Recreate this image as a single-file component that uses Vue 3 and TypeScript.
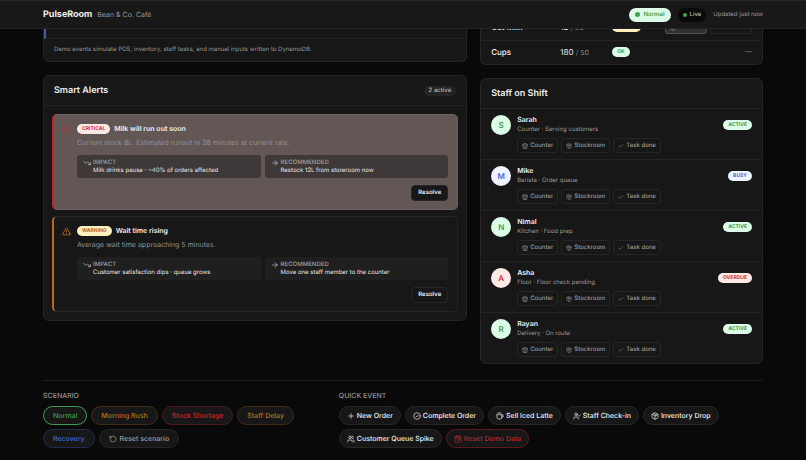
<script setup lang="ts">
import { h, type FunctionalComponent } from 'vue'

const iconPaths: Record<string, string[]> = {
  trend: ['M22 17l-8.5-8.5-5 5L2 7', 'M16 17h6v-6'],
  arrow: ['M5 12h14', 'M12 5l7 7-7 7'],
  alert: ['M22 12a10 10 0 1 1-20 0 10 10 0 0 1 20 0z', 'M12 8v4', 'M12 16h.01'],
  triangle: ['M21.7 18l-8-14a2 2 0 0 0-3.4 0l-8 14A2 2 0 0 0 4 21h16a2 2 0 0 0 1.7-3z', 'M12 9v4', 'M12 17h.01'],
  store: ['M2 7l4.4-4.4A2 2 0 0 1 7.8 2h8.4a2 2 0 0 1 1.4.6L22 7', 'M4 12v8a2 2 0 0 0 2 2h12a2 2 0 0 0 2-2v-8', 'M15 22v-4a2 2 0 0 0-2-2h-2a2 2 0 0 0-2 2v4', 'M2 7h20v3a2.7 2.7 0 0 1-5 1 2.7 2.7 0 0 1-5 0 2.7 2.7 0 0 1-5 0 2.7 2.7 0 0 1-5-1z'],
  box: ['M21 8a2 2 0 0 0-1-1.7l-7-4a2 2 0 0 0-2 0l-7 4A2 2 0 0 0 3 8v8a2 2 0 0 0 1 1.7l7 4a2 2 0 0 0 2 0l7-4a2 2 0 0 0 1-1.7z', 'M3.3 7L12 12l8.7-5', 'M12 22V12', 'M7.5 4.3l9 5.1'],
  check: ['M20 6L9 17l-5-5'],
  rotate: ['M3 12a9 9 0 1 0 9-9 9.8 9.8 0 0 0-6.7 2.7L3 8', 'M3 3v5h5'],
  plus: ['M5 12h14', 'M12 5v14'],
  circleCheck: ['M22 12a10 10 0 1 1-20 0 10 10 0 0 1 20 0z', 'M8.5 12.5l2.5 2.5 5-5.5'],
  coffee: ['M17 8h1a4 4 0 1 1 0 8h-1', 'M3 8h14v9a4 4 0 0 1-4 4H7a4 4 0 0 1-4-4z', 'M6 2v2', 'M10 2v2', 'M14 2v2'],
  userCheck: ['M16 21v-2a4 4 0 0 0-4-4H6a4 4 0 0 0-4 4v2', 'M13 7a4 4 0 1 1-8 0 4 4 0 0 1 8 0z', 'M16 11l2 2 4-4'],
  users: ['M16 21v-2a4 4 0 0 0-4-4H6a4 4 0 0 0-4 4v2', 'M13 7a4 4 0 1 1-8 0 4 4 0 0 1 8 0z', 'M22 21v-2a4 4 0 0 0-3-3.9', 'M16 3.1a4 4 0 0 1 0 7.8'],
  reset: ['M21 11V6a2 2 0 0 0-2-2H5a2 2 0 0 0-2 2v14a2 2 0 0 0 2 2h6', 'M3 9h18', 'M8 2v4', 'M16 2v4', 'M12 14v3h3', 'M12.5 16.5a5 5 0 1 1 1 4'],
}

const Icon: FunctionalComponent<{ name: string }> = (props) =>
  h(
    'svg',
    { class: 'icon', viewBox: '0 0 24 24', fill: 'none', stroke: 'currentColor', 'stroke-width': 2, 'stroke-linecap': 'round', 'stroke-linejoin': 'round', 'aria-hidden': 'true' },
    (iconPaths[props.name] ?? []).map((d) => h('path', { d })),
  )
Icon.props = ['name']

interface Alert { level: string; icon: string; title: string; text: string; impact: string; action: string }
const alerts: Alert[] = [
  { level: 'critical', icon: 'alert', title: 'Milk will run out soon', text: 'Current stock 8L. Estimated runout in 38 minutes at current rate.', impact: 'Milk drinks pause · ~40% of orders affected', action: 'Restock 12L from storeroom now' },
  { level: 'warning', icon: 'triangle', title: 'Wait time rising', text: 'Average wait time approaching 5 minutes.', impact: 'Customer satisfaction dips · queue grows', action: 'Move one staff member to the counter' },
]

interface Member { name: string; detail: string; status: string }
const staff: Member[] = [
  { name: 'Sarah', detail: 'Counter · Serving customers', status: 'active' },
  { name: 'Mike', detail: 'Barista · Order queue', status: 'busy' },
  { name: 'Nimal', detail: 'Kitchen · Food prep', status: 'active' },
  { name: 'Asha', detail: 'Floor · Floor check pending', status: 'overdue' },
  { name: 'Rayan', detail: 'Delivery · On route', status: 'active' },
]
const tasks = [
  { icon: 'store', label: 'Counter' },
  { icon: 'box', label: 'Stockroom' },
  { icon: 'check', label: 'Task done' },
]

const scenarios = [
  { label: 'Normal', tone: 'green' },
  { label: 'Morning Rush', tone: 'amber' },
  { label: 'Stock Shortage', tone: 'red' },
  { label: 'Staff Delay', tone: 'amber' },
  { label: 'Recovery', tone: 'blue' },
  { label: 'Reset scenario', tone: 'gray', icon: 'rotate' },
]
const events = [
  { label: 'New Order', icon: 'plus', tone: 'plain' },
  { label: 'Complete Order', icon: 'circleCheck', tone: 'plain' },
  { label: 'Sell Iced Latte', icon: 'coffee', tone: 'plain' },
  { label: 'Staff Check-in', icon: 'userCheck', tone: 'plain' },
  { label: 'Inventory Drop', icon: 'box', tone: 'plain' },
  { label: 'Customer Queue Spike', icon: 'users', tone: 'plain' },
  { label: 'Reset Demo Data', icon: 'reset', tone: 'danger' },
]
</script>

<template>
  <div class="page">
    <header class="topbar">
      <div class="brand">
        <h1>PulseRoom</h1>
        <span class="venue">Bean &amp; Co. Café</span>
      </div>
      <span class="mode"><i class="dot"></i>Normal</span>
      <span class="live"><i class="dot"></i>Live</span>
      <span class="updated">Updated just now</span>
    </header>

    <main>
      <div class="columns">
        <div class="stack">
          <section class="card feed">
            <div class="feed-item"></div>
            <p>Demo events simulate POS, inventory, staff tasks, and manual inputs written to DynamoDB.</p>
          </section>

          <section class="card">
            <div class="card-head">
              <h2>Smart Alerts</h2>
              <span class="count">2 active</span>
            </div>
            <div class="alerts">
              <article v-for="a in alerts" :key="a.title" class="alert" :class="a.level">
                <Icon :name="a.icon" />
                <div class="alert-body">
                  <div class="alert-title">
                    <span class="badge" :class="a.level">{{ a.level }}</span>
                    <h3>{{ a.title }}</h3>
                  </div>
                  <p>{{ a.text }}</p>
                  <div class="facts">
                    <div class="fact">
                      <Icon name="trend" />
                      <div><span class="label">Impact</span><span class="value">{{ a.impact }}</span></div>
                    </div>
                    <div class="fact">
                      <Icon name="arrow" />
                      <div><span class="label">Recommended</span><span class="value">{{ a.action }}</span></div>
                    </div>
                  </div>
                  <button type="button" class="resolve">Resolve</button>
                </div>
              </article>
            </div>
          </section>
        </div>

        <div class="stack">
          <section class="card flush">
            <table class="inventory">
              <tbody>
                <tr>
                  <td class="item">Oat Milk</td>
                  <td class="qty">12 <small>/ 36</small></td>
                  <td><span class="badge watch">Watch</span></td>
                  <td class="actions">
                    <div class="row-actions">
                      <button type="button" class="restock"><Icon name="box" />Restock</button>
                      <button type="button" class="ghost">Checked</button>
                    </div>
                  </td>
                </tr>
                <tr>
                  <td class="item">Cups</td>
                  <td class="qty">180 <small>/ 50</small></td>
                  <td><span class="badge active">OK</span></td>
                  <td class="actions">—</td>
                </tr>
              </tbody>
            </table>
          </section>

          <section class="card">
            <div class="card-head"><h2>Staff on Shift</h2></div>
            <ul class="staff">
              <li v-for="m in staff" :key="m.name">
                <span class="avatar" :class="m.status">{{ m.name[0] }}</span>
                <div class="member">
                  <h3>{{ m.name }}</h3>
                  <p>{{ m.detail }}</p>
                  <div class="tasks">
                    <button v-for="t in tasks" :key="t.label" type="button"><Icon :name="t.icon" />{{ t.label }}</button>
                  </div>
                </div>
                <span class="badge" :class="m.status">{{ m.status }}</span>
              </li>
            </ul>
          </section>
        </div>
      </div>

      <footer class="controls">
        <section>
          <h2>Scenario</h2>
          <div class="pills scenarios">
            <button v-for="s in scenarios" :key="s.label" type="button" :class="s.tone"><Icon v-if="s.icon" :name="s.icon" />{{ s.label }}</button>
          </div>
        </section>
        <section>
          <h2>Quick event</h2>
          <div class="pills">
            <button v-for="e in events" :key="e.label" type="button" :class="e.tone"><Icon :name="e.icon" />{{ e.label }}</button>
          </div>
        </section>
      </footer>
    </main>
  </div>
</template>

<style>
body { background: #090909; }
</style>

<style scoped>
* { box-sizing: border-box; }
.page { min-height: 100vh; background: #090909; color: #f0f0f0; font-family: Inter, "Liberation Sans", sans-serif; font-size: 6px; line-height: 10px; text-rendering: geometricPrecision; }
h1, h2, h3, p, ul { margin: 0; padding: 0; }
button { font: inherit; color: inherit; margin: 0; padding: 0; cursor: pointer; text-rendering: inherit; }
:deep(.icon) { width: 8px; height: 8px; flex: none; display: block; }

.topbar { position: fixed; top: 0; left: 0; right: 0; z-index: 2; height: 29px; padding: 0 43px; display: flex; align-items: center; background: #181818; border-top: 1px solid #262626; border-bottom: 1px solid #242424; }
.brand { display: flex; align-items: baseline; gap: 5px; }
h1 { font-size: 9px; line-height: 12px; font-weight: 700; }
.venue { font-size: 7px; color: #999; }
.mode, .live { height: 14px; display: flex; align-items: center; gap: 3px; border-radius: 7px; font-weight: 500; }
.mode { margin-left: auto; padding: 0 6px; background: #dcfce7; color: #3f9a55; font-weight: 600; }
.dot { width: 4px; height: 4px; border-radius: 50%; background: #3fa554; }
.mode .dot { width: 5px; height: 5px; }
.live { margin-left: 7px; padding: 0 5px; background: #090909; color: #bbb; }
.updated { margin-left: 7px; color: #999; }

main { padding: 0 43px 13px; }
.columns { display: grid; grid-template-columns: minmax(0, 3fr) minmax(0, 2fr); gap: 13px; align-items: start; }
.stack { display: flex; flex-direction: column; gap: 13px; }
.card { background: #171717; border: 1px solid #252525; border-radius: 6px; overflow: hidden; }
.card-head { height: 30px; padding: 0 10px; display: flex; align-items: center; justify-content: space-between; border-bottom: 1px solid #242424; }
.card-head h2 { font-size: 9px; line-height: 12px; font-weight: 600; }
.count { padding: 0 5px; border-radius: 6px; background: #252525; color: #b5b5b5; font-weight: 500; }

.feed, .flush { border-top: 0; border-radius: 0 0 6px 6px; }
.feed-item { height: 39px; border-left: 2px solid #4457a8; border-bottom: 1px solid #242424; }
.feed p { padding: 6px 10px; color: #959595; }

.alerts { padding: 8px; display: flex; flex-direction: column; gap: 6px; }
.alert { display: flex; gap: 6px; padding: 9px 9px 8px 8px; border: 1px solid #252525; border-left-width: 2px; border-radius: 5px; }
.alert > :deep(.icon) { width: 9px; height: 9px; margin-top: 1px; }
.alert.critical { background: #625755; border-color: #6c6160; border-left-color: #c1272d; }
.alert.critical > :deep(.icon) { color: #b3332f; }
.alert.warning { border-left-color: #b86b1c; }
.alert.warning > :deep(.icon) { color: #c57a22; }
.alert-body { flex: 1; min-width: 0; display: flex; flex-direction: column; }
.alert-title { display: flex; align-items: center; gap: 4px; }
h3 { font-size: 7px; line-height: 10px; font-weight: 600; }
.alert-body > p { margin-top: 4px; font-size: 7px; color: #929090; }
.facts { margin-top: 7px; display: grid; grid-template-columns: 1fr 1fr; gap: 4px; }
.fact { height: 23px; padding: 4px 6px 3px; display: flex; gap: 2px; border-radius: 3px; background: #1f1f1f; color: #ccc; }
.critical .fact { background: #3e3938; }
.fact span { display: block; line-height: 8px; }
.label { font-size: 6px; font-weight: 600; text-transform: uppercase; color: #949494; }
.value { color: #e6e6e6; }
.resolve { align-self: flex-end; margin-top: 7px; height: 16px; padding: 0 6px; border: 1px solid #262626; border-radius: 4px; background: #171717; font-weight: 600; }

.badge { padding: 0 5px; border-radius: 5px; font-size: 5px; line-height: 10px; font-weight: 700; text-transform: uppercase; }
.active { background: #dcfce7; color: #3f9a55; }
.busy { background: #eef4ff; color: #5365d6; }
.overdue, .badge.critical { background: #fee8e8; color: #cf3236; }
.badge.warning, .watch { background: #fef0bf; color: #bb6a1d; }

.inventory { width: 100%; border-collapse: collapse; table-layout: fixed; }
.inventory tr + tr { border-top: 1px solid #242424; }
.inventory td { height: 24px; padding: 0; vertical-align: middle; }
.inventory tr:first-child td { height: 40px; padding-top: 15px; }
.inventory .badge { display: inline-block; }
.inventory .item { width: 79px; padding-left: 10px; font-size: 8px; font-weight: 500; }
.inventory .qty { width: 52px; font-size: 8px; }
.qty small { font-size: 7px; color: #888; }
.inventory .actions { width: 100px; padding-right: 10px; font-size: 7px; text-align: right; color: #888; }
.row-actions { display: flex; justify-content: flex-end; gap: 3px; }
.row-actions button { width: 42px; height: 14px; display: flex; align-items: center; justify-content: center; gap: 3px; border: 1px solid #262626; border-radius: 3px; background: transparent; font-size: 6px; }
.row-actions .restock { background: #303030; border-color: #555; }

.staff { list-style: none; }
.staff li { display: flex; align-items: flex-start; gap: 6px; padding: 6px 10px; }
.staff li + li { border-top: 1px solid #242424; }
.avatar { width: 20px; height: 20px; border-radius: 50%; font-size: 8px; line-height: 20px; font-weight: 600; text-align: center; }
.member { flex: 1; }
.member p { color: #999; }
.tasks { margin-top: 3px; display: flex; gap: 3px; }
.tasks button { height: 15px; padding: 0 4px; display: flex; align-items: center; gap: 2px; border: 1px solid #262626; border-radius: 3px; background: transparent; color: #999; font-weight: 500; }
.tasks :deep(.icon) { width: 6px; height: 6px; }
.staff .badge { margin-top: 5px; }

.controls { margin-top: 16px; padding-top: 10px; border-top: 1px solid #1c1c1c; display: grid; grid-template-columns: minmax(0, 2fr) minmax(0, 3fr); gap: 13px; }
.controls h2 { font-size: 7px; line-height: 10px; font-weight: 500; text-transform: uppercase; color: #959595; }
.pills { margin-top: 5px; display: flex; flex-wrap: wrap; gap: 4px; }
.pills button { height: 19px; padding: 0 7px; display: flex; align-items: center; gap: 2px; border: 1px solid #262626; border-radius: 10px; background: #171717; font-size: 7px; font-weight: 500; }
.pills.scenarios button { padding: 0 9px; gap: 3px; }
.pills .green { color: #3f9a55; border-color: #3f9a55; }
.pills .amber { color: #b5741f; border-color: #3d2c18; }
.pills .red { color: #c92a30; border-color: #4a1a1c; }
.pills .danger { color: #b8282c; border-color: #5a1a1c; }
.pills .blue { color: #4469d8; border-color: #1f2b50; }
.pills .gray { color: #a0a0a0; }
</style>
